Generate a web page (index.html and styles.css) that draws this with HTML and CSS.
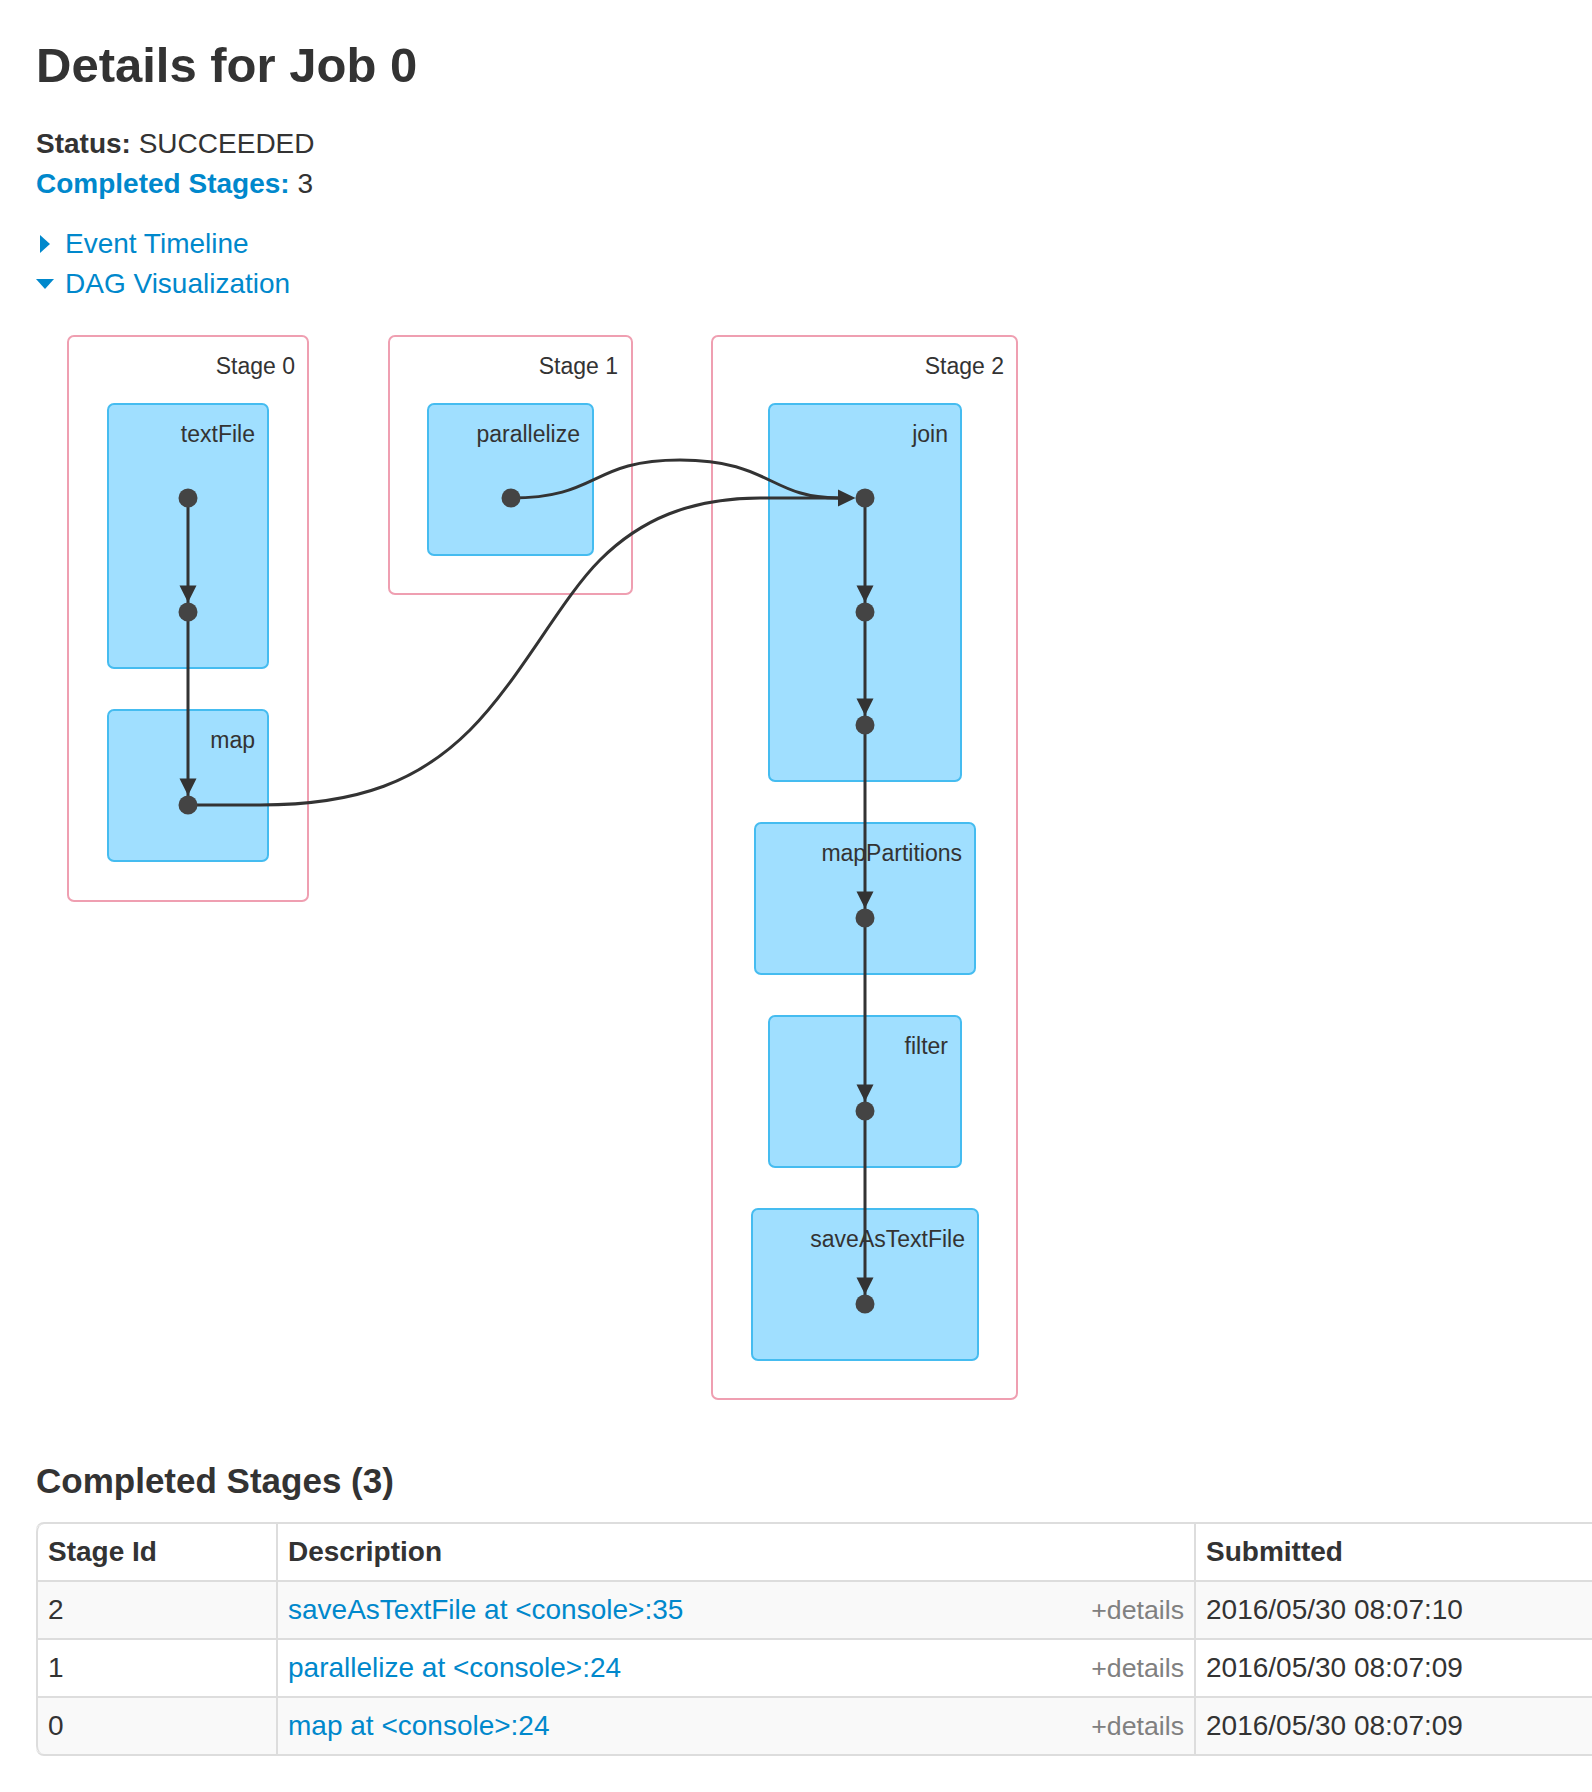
FILE: index.html
```html
<!DOCTYPE html>
<html lang="en">
<head>
    <meta charset="utf-8">
    <title>Details for Job 0</title>
    <link rel="stylesheet" href="styles.css">
</head>
<body>
<div class="container-fluid">
    <h3 class="page-title">Details for Job 0</h3>
    <ul class="job-summary">
        <li><strong>Status:</strong> SUCCEEDED</li>
        <li><a href="#completed"><strong>Completed Stages:</strong></a> 3</li>
    </ul>

    <div class="toggle-list">
        <div class="toggle"><span class="arrow-closed"></span><a href="#">Event Timeline</a></div>
        <div class="toggle"><span class="arrow-open"></span><a href="#">DAG Visualization</a></div>
    </div>

    <div id="dag-viz-graph">
        <svg class="job" width="1100" height="1100" viewBox="36 320 1100 1100">
            <!-- stages -->
            <g class="cluster stage">
                <rect x="68" y="336" width="240" height="565" rx="6"></rect>
                <text x="295" y="374">Stage 0</text>
            </g>
            <g class="cluster stage">
                <rect x="389" y="336" width="243" height="258" rx="6"></rect>
                <text x="618" y="374">Stage 1</text>
            </g>
            <g class="cluster stage">
                <rect x="712" y="336" width="305" height="1063" rx="6"></rect>
                <text x="1004" y="374">Stage 2</text>
            </g>

            <!-- rdd operations -->
            <g class="cluster rdd">
                <rect x="108" y="404" width="160" height="264" rx="6"></rect>
                <text x="255" y="442">textFile</text>
            </g>
            <g class="cluster rdd">
                <rect x="108" y="710" width="160" height="151" rx="6"></rect>
                <text x="255" y="748">map</text>
            </g>
            <g class="cluster rdd">
                <rect x="428" y="404" width="165" height="151" rx="6"></rect>
                <text x="580" y="442">parallelize</text>
            </g>
            <g class="cluster rdd">
                <rect x="769" y="404" width="192" height="377" rx="6"></rect>
                <text x="948" y="442">join</text>
            </g>
            <g class="cluster rdd">
                <rect x="755" y="823" width="220" height="151" rx="6"></rect>
                <text x="962" y="861">mapPartitions</text>
            </g>
            <g class="cluster rdd">
                <rect x="769" y="1016" width="192" height="151" rx="6"></rect>
                <text x="948" y="1054">filter</text>
            </g>
            <g class="cluster rdd">
                <rect x="752" y="1209" width="226" height="151" rx="6"></rect>
                <text x="965" y="1247">saveAsTextFile</text>
            </g>

            <!-- edges -->
            <g class="edges">
                <path d="M188 498 V805"></path>
                <path d="M865 498 V1304"></path>
                <path d="M511 498 C600 498 590 460 680 460 C770 460 770 498 838 498"></path>
                <path d="M188 805 L260 805 C360 805 420 780 470 730 C520 680 560 600 600 560 C640 520 690 498 760 498 L838 498"></path>
            </g>
            <g class="arrows">
                <polygon points="179.5,585.5 196.5,585.5 188,602.5"></polygon>
                <polygon points="179.5,778.5 196.5,778.5 188,795.5"></polygon>
                <polygon points="838,489.5 838,506.5 855.5,498"></polygon>
                <polygon points="856.5,585.5 873.5,585.5 865,602.5"></polygon>
                <polygon points="856.5,698.5 873.5,698.5 865,715.5"></polygon>
                <polygon points="856.5,891.5 873.5,891.5 865,908.5"></polygon>
                <polygon points="856.5,1084.5 873.5,1084.5 865,1101.5"></polygon>
                <polygon points="856.5,1277.5 873.5,1277.5 865,1294.5"></polygon>
            </g>
            <g class="node">
                <circle cx="188" cy="498" r="9.5"></circle>
                <circle cx="188" cy="612" r="9.5"></circle>
                <circle cx="188" cy="805" r="9.5"></circle>
                <circle cx="511" cy="498" r="9.5"></circle>
                <circle cx="865" cy="498" r="9.5"></circle>
                <circle cx="865" cy="612" r="9.5"></circle>
                <circle cx="865" cy="725" r="9.5"></circle>
                <circle cx="865" cy="918" r="9.5"></circle>
                <circle cx="865" cy="1111" r="9.5"></circle>
                <circle cx="865" cy="1304" r="9.5"></circle>
            </g>
        </svg>
    </div>

    <h4 id="completed">Completed Stages (3)</h4>
    <div class="table-wrap">
        <table class="table table-bordered table-condensed table-striped">
            <thead>
            <tr>
                <th class="col-id">Stage Id</th>
                <th class="col-desc">Description</th>
                <th class="col-submitted">Submitted</th>
            </tr>
            </thead>
            <tbody>
            <tr>
                <td>2</td>
                <td><span class="expand-details">+details</span><a href="#">saveAsTextFile at &lt;console&gt;:35</a></td>
                <td>2016/05/30 08:07:10</td>
            </tr>
            <tr>
                <td>1</td>
                <td><span class="expand-details">+details</span><a href="#">parallelize at &lt;console&gt;:24</a></td>
                <td>2016/05/30 08:07:09</td>
            </tr>
            <tr>
                <td>0</td>
                <td><span class="expand-details">+details</span><a href="#">map at &lt;console&gt;:24</a></td>
                <td>2016/05/30 08:07:09</td>
            </tr>
            </tbody>
        </table>
    </div>
</div>
</body>
</html>
```

FILE: styles.css
```css
body {
    margin: 0;
    background: #fff;
    color: #333;
    font-family: "Liberation Sans", Arial, Helvetica, sans-serif;
    font-size: 28px;
    line-height: 40px;
}

a {
    color: #0088cc;
    text-decoration: none;
}

.container-fluid {
    padding-left: 36px;
}

h3.page-title {
    margin: 38px 0 0;
    font-size: 49px;
    line-height: 54px;
    font-weight: bold;
}

.job-summary {
    list-style: none;
    margin: 32px 0 0;
    padding: 0;
}

.toggle-list {
    margin-top: 20px;
}

.toggle {
    display: flex;
    align-items: center;
    height: 40px;
}

.arrow-closed {
    width: 0;
    height: 0;
    margin: 0 15px 0 4px;
    border-top: 9px solid transparent;
    border-bottom: 9px solid transparent;
    border-left: 10px solid #0088cc;
}

.arrow-open {
    width: 0;
    height: 0;
    margin-right: 11px;
    border-left: 9px solid transparent;
    border-right: 9px solid transparent;
    border-top: 10px solid #0088cc;
}

#dag-viz-graph {
    margin-top: 16px;
    height: 1100px;
}

#dag-viz-graph svg {
    display: block;
}

#dag-viz-graph svg text {
    font-family: "Liberation Sans", Arial, sans-serif;
    font-size: 23px;
    fill: #333;
    text-anchor: end;
}

#dag-viz-graph svg g.stage rect {
    fill: #fff;
    stroke: #ef9fb1;
    stroke-width: 2px;
}

#dag-viz-graph svg g.rdd rect {
    fill: #a0dfff;
    stroke: #45bcf0;
    stroke-width: 2px;
}

#dag-viz-graph svg g.edges path {
    fill: none;
    stroke: #333;
    stroke-width: 3px;
}

#dag-viz-graph svg g.arrows polygon {
    fill: #333;
}

#dag-viz-graph svg g.node circle {
    fill: #444;
}

h4 {
    margin: 41px 0 21px;
    font-size: 35px;
    line-height: 40px;
    font-weight: bold;
}

.table-wrap {
    overflow: hidden;
}

.table {
    width: 2000px;
    table-layout: fixed;
    border-collapse: separate;
    border-spacing: 0;
    border: 2px solid #ddd;
    border-left: 0;
    border-radius: 8px;
}

.table th,
.table td {
    box-sizing: border-box;
    padding: 8px 10px;
    line-height: 40px;
    text-align: left;
    vertical-align: top;
    border-left: 2px solid #ddd;
    border-top: 2px solid #ddd;
    white-space: nowrap;
}

.table thead th {
    border-top: 0;
    font-weight: bold;
}

.table thead tr:first-child > th:first-child {
    border-top-left-radius: 8px;
}

.table tbody tr:last-child > td:first-child {
    border-bottom-left-radius: 8px;
}

.table-striped tbody tr:nth-child(odd) td {
    background-color: #f9f9f9;
}

.col-id { width: 240px; }
.col-desc { width: 918px; }

.expand-details {
    float: right;
    font-size: 26.7px;
    color: grey;
    cursor: pointer;
}
```
